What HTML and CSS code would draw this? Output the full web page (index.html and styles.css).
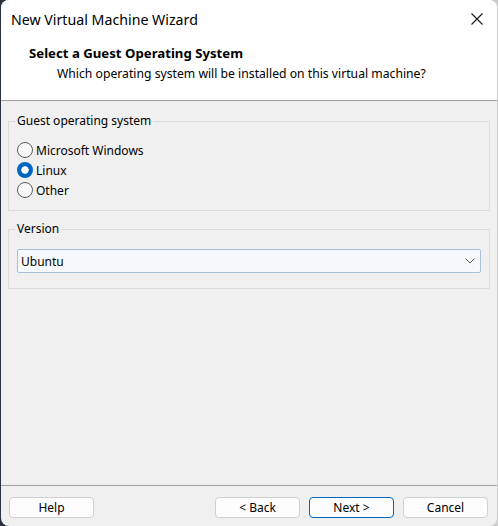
FILE: index.html
```
<!DOCTYPE html>
<html>
<head>
<meta charset="utf-8">
<link rel="stylesheet" href="styles.css">
</head>
<body>
<div class="window">
  <div class="header">
    <div class="titlebar">
      <span class="title">New Virtual Machine Wizard</span>
      <svg class="close" width="12" height="12" viewBox="0 0 12 12"><path d="M0.5 0.5 L11.5 11.5 M11.5 0.5 L0.5 11.5" stroke="#1a1a1a" stroke-width="1.1" fill="none"/></svg>
    </div>
    <div class="heading">Select a Guest Operating System</div>
    <div class="subtitle">Which operating system will be installed on this virtual machine?</div>
  </div>
  <div class="content">
    <fieldset class="group group-os">
      <legend>Guest operating system</legend>
      <div class="radio-row"><span class="radio"></span><span>Microsoft Windows</span></div>
      <div class="radio-row"><span class="radio checked"></span><span>Linux</span></div>
      <div class="radio-row"><span class="radio"></span><span>Other</span></div>
    </fieldset>
    <fieldset class="group group-version">
      <legend>Version</legend>
      <div class="combo">
        <span>Ubuntu</span>
        <svg class="chevron" width="10" height="6" viewBox="0 0 10 6"><path d="M0.5 0.5 L5 5 L9.5 0.5" stroke="#5a5a5a" stroke-width="1" fill="none"/></svg>
      </div>
    </fieldset>
  </div>
  <div class="footer">
    <button class="btn">Help</button>
    <span class="spacer"></span>
    <button class="btn">&lt; Back</button>
    <button class="btn primary">Next &gt;</button>
    <button class="btn">Cancel</button>
  </div>
</div>
</body>
</html>
```
FILE: styles.css
```
html, body {
  margin: 0;
  padding: 0;
}
body {
  width: 498px;
  height: 526px;
  overflow: hidden;
  background: linear-gradient(90deg, #2b3240 0, #2b3240 50%, #cfcfcf 50%, #cfcfcf 100%);
  font-family: "Noto Sans", "Segoe UI", sans-serif;
  font-size: 12px;
  color: #000;
}
.window {
  margin-left: 1px;
  width: 496px;
  height: 526px;
  border-radius: 8px;
  overflow: hidden;
  background: #f0f0f0;
  display: flex;
  flex-direction: column;
}
.header {
  background: #fff;
  height: 100px;
  border-bottom: 1px solid #a0a0a0;
  flex: none;
}
.titlebar {
  height: 38px;
  display: flex;
  align-items: center;
  padding-left: 10px;
  padding-right: 14px;
}
.title {
  font-size: 14.2px;
  flex: 1;
}
.close {
  display: block;
}
.heading {
  margin-top: 7px;
  padding-left: 28px;
  line-height: 16px;
  font-weight: bold;
  font-size: 13.2px;
}
.subtitle {
  margin-top: 5px;
  padding-left: 56px;
  line-height: 16px;
  font-size: 12.2px;
}
.content {
  flex: 1;
  padding: 0 7px;
}
.group {
  margin: 0;
  border: 1px solid #dcdcdc;
  padding: 0 8px;
  min-width: 0;
}
.group legend {
  padding: 0 2px;
  margin-left: -2px;
  line-height: 16px;
}
.group-os {
  margin-top: 12px;
  padding-top: 11px;
  padding-bottom: 10px;
}
.group-version {
  margin-top: 10px;
  padding-top: 12px;
  padding-bottom: 15px;
}
.radio-row {
  height: 20px;
  display: flex;
  align-items: center;
  gap: 3px;
}
.radio {
  box-sizing: border-box;
  width: 16px;
  height: 16px;
  border-radius: 50%;
  border: 1px solid #5c5c5c;
  background: #f8f8f8;
  flex: none;
}
.radio.checked {
  border: none;
  background: radial-gradient(circle, #fff 0, #fff 3.4px, #0067c0 4px);
}
.combo {
  box-sizing: border-box;
  height: 24px;
  border: 1px solid #a8c0d8;
  background: #f6f9fc;
  border-radius: 2px;
  display: flex;
  align-items: center;
  padding-left: 3px;
  padding-right: 5px;
}
.combo span {
  flex: 1;
}
.chevron {
  display: block;
}
.footer {
  flex: none;
  height: 41px;
  box-sizing: border-box;
  border-top: 1px solid #a0a0a0;
  display: flex;
  align-items: flex-start;
  padding: 11px 9px 0 8px;
  gap: 9px;
}
.spacer {
  flex: 1;
}
.btn {
  box-sizing: border-box;
  width: 85px;
  height: 21px;
  border: 1px solid #d0d0d0;
  border-radius: 4px;
  background: #fdfdfd;
  font-family: inherit;
  font-size: 12px;
  color: #000;
  padding: 0;
}
.btn.primary {
  border-color: #0067c0;
}
```
